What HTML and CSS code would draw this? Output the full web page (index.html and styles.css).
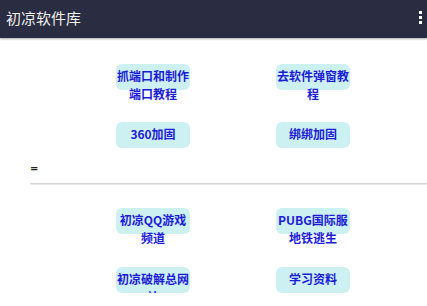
FILE: index.html
```html
<!DOCTYPE html>
<html lang="zh">
<head>
    <meta charset="UTF-8">
    <meta name="viewport" content="width=device-width, initial-scale=1.0">
    <title>初凉软件库</title>
    <link rel="stylesheet" href="styles.css">
</head>
<body>

    <div class="toolbar">
        <div class="title">初凉软件库</div>
        <div class="menu">
            <span></span><span></span><span></span>
        </div>
    </div>

    <div class="grid first">
        <div class="cell"><button class="btn">抓端口和制作端口教程</button></div>
        <div class="cell"><button class="btn">去软件弹窗教程</button></div>
        <div class="cell"><button class="btn">360加固</button></div>
        <div class="cell"><button class="btn">绑绑加固</button></div>
    </div>

    <div class="divider">
        <div class="mark">=</div>
        <div class="line"></div>
    </div>

    <div class="grid">
        <div class="cell"><button class="btn">初凉QQ游戏频道</button></div>
        <div class="cell"><button class="btn">PUBG国际服地铁逃生</button></div>
        <div class="cell"><button class="btn">初凉破解总网站</button></div>
        <div class="cell"><button class="btn">学习资料</button></div>
    </div>

</body>
</html>
```

FILE: styles.css
```css
body {
    margin: 0;
    background-color: #fff;
    font-family: "Noto Sans CJK SC", "Noto Sans", sans-serif;
    overflow: hidden;
}

.toolbar {
    height: 38px;
    background-color: #2a2c41;
    display: flex;
    align-items: center;
    justify-content: space-between;
    padding: 0 6px;
    box-shadow: 0 1px 2px rgba(0, 0, 0, 0.35);
    position: relative;
}

.title {
    color: #f0f0f0;
    font-size: 15px;
    margin-top: -4px;
}

.menu {
    display: flex;
    flex-direction: column;
    gap: 2px;
    margin-top: -4px;
    margin-right: -1px;
}

.menu span {
    width: 3px;
    height: 3px;
    background: #fff;
}

.grid {
    display: grid;
    grid-template-columns: 160px 160px;
    grid-auto-rows: 26px;
    row-gap: 33px;
    margin-left: 73px;
}

.grid.first {
    padding-top: 26px;
    row-gap: 32px;
}

.cell {
    display: flex;
    justify-content: center;
}

.btn {
    width: 74px;
    height: 26px;
    padding: 3px 1px 0;
    border: none;
    border-radius: 6px;
    background-color: #cdf0f2;
    color: #1c1cd4;
    font-family: inherit;
    font-size: 12px;
    font-weight: bold;
    line-height: 18px;
    text-align: center;
    display: flex;
    justify-content: center;
    align-items: flex-start;
    overflow: visible;
    white-space: normal;
    word-break: break-all;
}

.divider {
    margin: 15px 0 23px 30px;
}

.mark {
    font-size: 10px;
    line-height: 12px;
    color: #222;
    font-family: "DejaVu Sans", sans-serif;
    font-weight: bold;
}

.line {
    margin-top: 8px;
    height: 1px;
    background: #d4d4d4;
    border-bottom: 1px solid #e8e8e8;
}
```
